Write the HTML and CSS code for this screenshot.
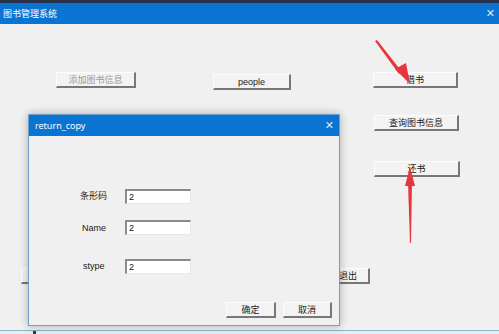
FILE: index.html
```html
<!DOCTYPE html>
<html lang="zh-CN">
<head>
    <meta charset="UTF-8">
    <title>图书管理系统</title>
    <link rel="stylesheet" href="styles.css">
</head>
<body>

    <div class="main-window">
        <div class="titlebar">
            <span class="title">图书管理系统</span>
            <span class="close">&#x2715;</span>
        </div>
        <div class="client">
            <button class="btn b-add" disabled>添加图书信息</button>
            <button class="btn b-people">people</button>
            <button class="btn b-borrow">借书</button>
            <button class="btn b-query">查询图书信息</button>
            <button class="btn b-return">还书</button>
            <button class="btn b-left"></button>
            <button class="btn b-exit">退出</button>
        </div>
        <div class="taskbar"><span class="mark"></span></div>
    </div>

    <div class="dialog">
        <div class="titlebar dlg-bar">
            <span class="title">return_copy</span>
            <span class="close">&#x2715;</span>
        </div>
        <div class="dlg-client">
            <label class="lbl l-code">条形码</label>
            <input class="field f-code" value="2">
            <label class="lbl l-name">Name</label>
            <input class="field f-name" value="2">
            <label class="lbl l-type">stype</label>
            <input class="field f-type" value="2">
            <button class="btn b-ok">确定</button>
            <button class="btn b-cancel">取消</button>
        </div>
    </div>

    <svg class="arrows" width="499" height="334" viewBox="0 0 499 334">
        <polygon points="375,41 377,40 402,72 399,74" fill="#e8343c"/>
        <polygon points="395,69 406,63 410,84" fill="#e8343c"/>
        <polygon points="410,243 411,243 412,182 408,182" fill="#e8343c"/>
        <polygon points="405,186 415,186 410,167" fill="#e8343c"/>
    </svg>

</body>
</html>
```

FILE: styles.css
```css
html, body {
    margin: 0;
    padding: 0;
}
body {
    width: 499px;
    height: 334px;
    overflow: hidden;
    position: relative;
    background: #f0f0f0;
    font-family: "Noto Sans CJK SC", "Liberation Sans", sans-serif;
    font-size: 9px;
    color: #1a1a1a;
}
.main-window {
    position: absolute;
    left: 0;
    top: 0;
    width: 499px;
    height: 334px;
    border-top: 3px solid #26324a;
    box-sizing: border-box;
}
.titlebar {
    height: 21px;
    background: #0a74d3;
    color: #fff;
    display: flex;
    align-items: center;
    justify-content: space-between;
    padding: 0 4px 0 3px;
}
.title {
    font-size: 9px;
    line-height: 1;
}
.close {
    font-family: "DejaVu Sans", sans-serif;
    font-size: 11px;
    color: #dfe9f5;
}
.client {
    position: relative;
    height: 306px;
}
.btn {
    position: absolute;
    box-sizing: border-box;
    height: 16px;
    padding: 0;
    margin: 0;
    background: #f3f3f3;
    border-top: 1px solid #fdfdfd;
    border-left: 1px solid #fdfdfd;
    border-right: 2px solid #777;
    border-bottom: 2px solid #777;
    font-family: "Noto Sans CJK SC", "Liberation Sans", sans-serif;
    font-size: 9px;
    line-height: 12px;
    color: #1a1a1a;
}
.btn:disabled {
    color: #9a9a9a;
}
.b-add { left: 56px; top: 48px; width: 80px; }
.b-people { left: 213px; top: 50px; width: 78px; font-family: "Liberation Sans", sans-serif; }
.b-borrow { left: 373px; top: 48px; width: 85px; }
.b-query { left: 374px; top: 91px; width: 85px; }
.b-return { left: 374px; top: 137px; width: 86px; }
.b-left { left: 21px; top: 244px; width: 60px; }
.b-exit { left: 290px; top: 244px; width: 80px; text-align: right; padding-right: 11px; }
.taskbar {
    position: absolute;
    left: 0;
    bottom: 0;
    width: 499px;
    height: 3px;
    background: #e6eef3;
    border-top: 1px solid #8fb3c9;
}
.mark {
    position: absolute;
    left: 33px;
    top: 0;
    width: 3px;
    height: 3px;
    background: #2b3a4c;
}
.dialog {
    position: absolute;
    left: 28px;
    top: 114px;
    width: 312px;
    height: 212px;
    box-sizing: border-box;
    border: 1px solid #6f9fcc;
    background: #f0f0f0;
    box-shadow: 0 0 9px rgba(0, 0, 0, 0.28);
}
.dlg-bar {
    padding: 0 5px 0 6px;
}
.dlg-bar .title {
    font-family: "Noto Sans", "Liberation Sans", sans-serif;
    font-size: 9px;
}
.dlg-client {
    position: relative;
    height: 189px;
}
.lbl {
    position: absolute;
    font-size: 9px;
    line-height: 12px;
}
.l-code { left: 51px; top: 54px; }
.l-name { left: 53px; top: 86px; font-family: "Liberation Sans", sans-serif; }
.l-type { left: 54px; top: 124px; font-family: "Liberation Sans", sans-serif; }
.field {
    position: absolute;
    box-sizing: border-box;
    width: 66px;
    height: 15px;
    margin: 0;
    padding: 0 0 0 2px;
    background: #fff;
    border-top: 2px solid #8a8a8a;
    border-left: 2px solid #8a8a8a;
    border-right: 1px solid #e8e8e8;
    border-bottom: 1px solid #e8e8e8;
    font-family: "Liberation Sans", sans-serif;
    font-size: 9px;
    color: #111;
}
.f-code { left: 96px; top: 53px; }
.f-name { left: 96px; top: 84px; }
.f-type { left: 96px; top: 123px; }
.b-ok { left: 197px; top: 166px; width: 50px; }
.b-cancel { left: 254px; top: 166px; width: 49px; }
.arrows {
    position: absolute;
    left: 0;
    top: 0;
    pointer-events: none;
}
```
